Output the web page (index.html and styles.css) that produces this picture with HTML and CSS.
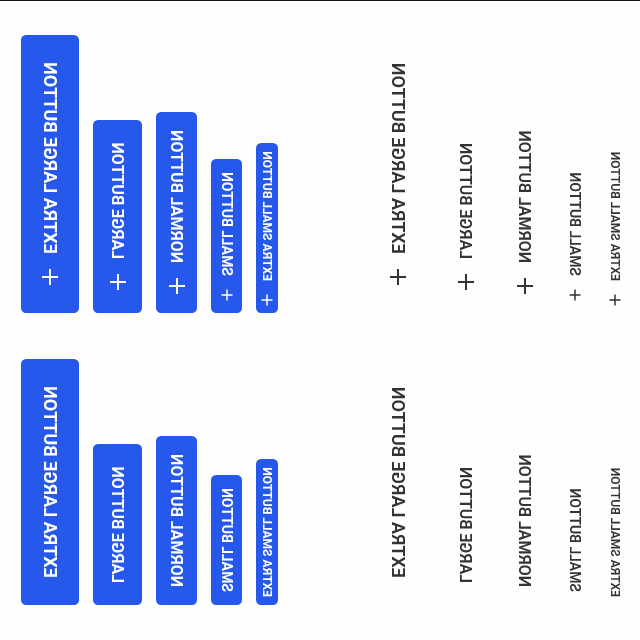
FILE: index.html
```
<!DOCTYPE html>
<html lang="en">
<head>
<meta charset="utf-8">
<title>Buttons</title>
<link rel="stylesheet" href="styles.css">
</head>
<body>
<svg class="defs" aria-hidden="true"><symbol id="plus" viewBox="0 0 18 18"><path d="M9 1v16M1 9h16"/></symbol><symbol id="plus-small" viewBox="0 0 12 12"><path d="M6 .5v11M.5 6h11"/></symbol></svg>
<main class="board">
  <section class="panel filled">
    <div class="row"><button class="btn xl">EXTRA LARGE BUTTON</button><button class="btn xl"><svg class="icon"><use href="#plus"/></svg>EXTRA LARGE BUTTON</button></div>
    <div class="row"><button class="btn lg">LARGE BUTTON</button><button class="btn lg"><svg class="icon"><use href="#plus"/></svg>LARGE BUTTON</button></div>
    <div class="row"><button class="btn md">NORMAL BUTTON</button><button class="btn md"><svg class="icon"><use href="#plus"/></svg>NORMAL BUTTON</button></div>
    <div class="row"><button class="btn sm">SMALL BUTTON</button><button class="btn sm"><svg class="icon small"><use href="#plus-small"/></svg>SMALL BUTTON</button></div>
    <div class="row"><button class="btn xs">EXTRA SMALL BUTTON</button><button class="btn xs"><svg class="icon small"><use href="#plus-small"/></svg>EXTRA SMALL BUTTON</button></div>
  </section>
  <section class="panel plain">
    <div class="row"><button class="btn xl">EXTRA LARGE BUTTON</button><button class="btn xl"><svg class="icon"><use href="#plus"/></svg>EXTRA LARGE BUTTON</button></div>
    <div class="row"><button class="btn lg">LARGE BUTTON</button><button class="btn lg"><svg class="icon"><use href="#plus"/></svg>LARGE BUTTON</button></div>
    <div class="row"><button class="btn md">NORMAL BUTTON</button><button class="btn md"><svg class="icon"><use href="#plus"/></svg>NORMAL BUTTON</button></div>
    <div class="row"><button class="btn sm">SMALL BUTTON</button><button class="btn sm"><svg class="icon small"><use href="#plus-small"/></svg>SMALL BUTTON</button></div>
    <div class="row"><button class="btn xs">EXTRA SMALL BUTTON</button><button class="btn xs"><svg class="icon small"><use href="#plus-small"/></svg>EXTRA SMALL BUTTON</button></div>
  </section>
</main>
</body>
</html>
```
FILE: styles.css
```
* { box-sizing: border-box; }
body { margin: 0; background: #fefefe; }
.defs { position: absolute; width: 0; height: 0; }

/* Text runs down the page, then the board is mirrored so it reads upwards. */
.board {
  writing-mode: vertical-lr;
  transform: scaleY(-1);
  height: 100vh;
  min-width: 100%;
  padding-block: 21px 0;
  padding-inline: 35px 0;
  border-inline-end: 1px solid #111;
  display: flex;
  flex-direction: column;
  gap: 91px;
}
.panel { display: flex; flex-direction: column; gap: 14px; }
.row { display: grid; grid-template-columns: 247px 279px; column-gap: 45px; justify-items: start; }

.btn {
  writing-mode: inherit;
  display: inline-flex;
  align-items: center;
  justify-content: center;
  gap: 14px;
  margin: 0;
  border: 0;
  border-radius: 5px;
  background: none;
  color: #333;
  font-family: Roboto, "Liberation Sans", sans-serif;
  font-weight: 600;
  white-space: nowrap;
}
.filled .btn { background: #2558eb; color: #fff; font-weight: 700; }
.xl { block-size: 58px; padding: 0; padding-inline: 27px; font-size: 18px; }
.lg { block-size: 49px; padding: 0; padding-inline: 22px; font-size: 16px; }
.md { block-size: 41px; padding: 0; padding-inline: 18px; font-size: 16px; }
.sm { block-size: 31px; padding: 0; padding-inline: 13px; font-size: 14px; }
.xs { block-size: 22px; padding: 0; padding-inline: 8px; font-size: 12px; }

.icon { width: 18px; height: 18px; flex: none; fill: none; stroke: currentColor; stroke-width: 2; }
.icon.small { width: 12px; height: 12px; margin-inline: -1px; stroke-width: 1.5; }
```
